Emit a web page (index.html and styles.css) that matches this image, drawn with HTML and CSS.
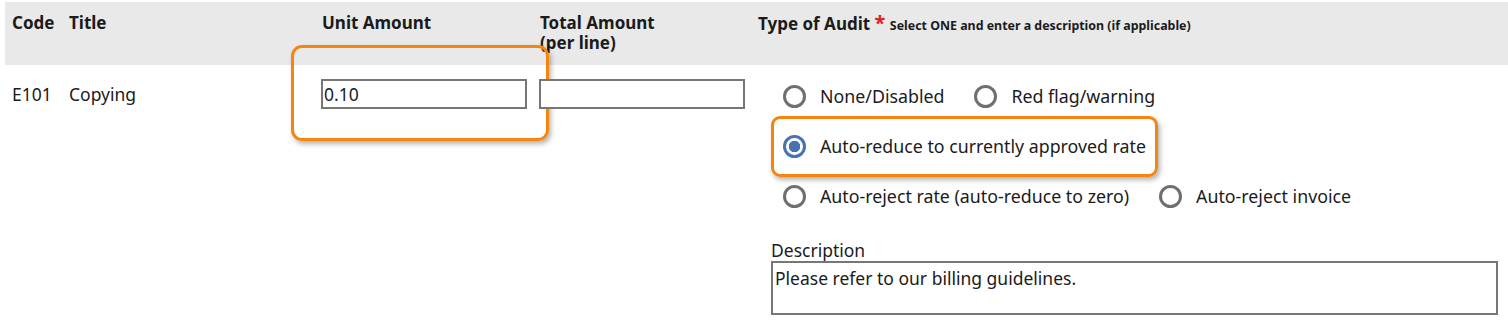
FILE: index.html
```html
<!DOCTYPE html>
<html lang="en">
<head>
  <meta charset="UTF-8">
  <title>Audit rules</title>
  <link rel="stylesheet" href="styles.css">
</head>
<body>

  <div class="rule-head">
    <div class="col-code">Code</div>
    <div class="col-title">Title</div>
    <div class="col-unit">Unit Amount</div>
    <div class="col-total">Total Amount<br>(per line)</div>
    <div class="col-audit">Type of Audit <span class="star">*</span> <span class="hint">Select ONE and enter a description (if applicable)</span></div>
  </div>

  <div class="rule-row">
    <div class="col-code cell-text">E101</div>
    <div class="col-title cell-text">Copying</div>
    <div class="col-unit">
      <div class="field highlight-field">
        <input type="text" value="0.10">
      </div>
    </div>
    <div class="col-total">
      <div class="field">
        <input type="text" value="">
      </div>
    </div>
    <div class="col-audit audit-cell">
      <div class="audit-options">
        <div class="option-line">
          <label class="option"><input type="radio" name="audit"><span>None/Disabled</span></label>
          <label class="option"><input type="radio" name="audit"><span>Red flag/warning</span></label>
        </div>
        <div class="option-line">
          <label class="option highlight-option"><input type="radio" name="audit" checked><span>Auto-reduce to currently approved rate</span></label>
        </div>
        <div class="option-line">
          <label class="option"><input type="radio" name="audit"><span>Auto-reject rate (auto-reduce to zero)</span></label>
          <label class="option"><input type="radio" name="audit"><span>Auto-reject invoice</span></label>
        </div>
      </div>
      <div class="description">
        <label for="desc">Description</label>
        <textarea id="desc">Please refer to our billing guidelines.</textarea>
      </div>
    </div>
  </div>

</body>
</html>
```

FILE: styles.css
```css
body {
  margin: 0;
  font-family: "Noto Sans", "Open Sans", sans-serif;
  color: #1b1b1b;
  background: #fff;
}
.rule-head,
.rule-row {
  display: flex;
  margin-left: 5px;
  padding-left: 7px;
}
.rule-head {
  margin-top: 2px;
  height: 63px;
  box-sizing: border-box;
  padding-top: 11px;
  background-color: #e9e9e9;
  font-weight: 700;
  font-size: 17px;
  line-height: 20px;
}
.col-code {
  width: 57px;
  flex-shrink: 0;
}
.col-title {
  width: 253px;
  flex-shrink: 0;
}
.col-unit,
.col-total {
  width: 218px;
  flex-shrink: 0;
}
.col-audit {
  flex: 1;
}
.star {
  color: #e21b1b;
  font-size: 20px;
}
.hint {
  font-size: 12.4px;
}
.rule-row {
  padding-top: 14px;
}
.cell-text {
  font-size: 17.5px;
  line-height: 30px;
}
.field {
  position: relative;
  margin-left: -1px;
  width: 206px;
}
.field input {
  display: block;
  width: 100%;
  height: 30px;
  box-sizing: border-box;
  border: 2px solid #777;
  padding: 0 1px;
  font-family: "Noto Sans", sans-serif;
  font-size: 17.5px;
  color: #1b1b1b;
  outline: none;
}
.highlight-field::after {
  content: "";
  position: absolute;
  top: -34px;
  bottom: -32px;
  left: -30px;
  right: -22px;
  border: 3px solid #f58410;
  border-radius: 11px;
  box-shadow: 2px 3px 5px rgba(0, 0, 0, 0.3);
  pointer-events: none;
}
.audit-cell {
  padding-left: 13px;
}
.audit-options {
  margin-top: -8px;
}
.option-line {
  display: flex;
  gap: 6px;
  height: 50px;
  align-items: center;
}
.option {
  position: relative;
  display: flex;
  align-items: center;
  gap: 14px;
  padding: 0 12px;
  height: 50px;
  font-size: 17.8px;
  color: #1b1b1b;
}
.option input {
  appearance: none;
  margin: 0;
  width: 23px;
  height: 23px;
  border: 3px solid #6f6f6f;
  border-radius: 50%;
  box-sizing: border-box;
  background: #fff;
}
.option input:checked {
  border-color: #4a72b2;
  background: radial-gradient(circle, #4a72b2 0 5.5px, #fff 6px);
}
.highlight-option::after {
  content: "";
  position: absolute;
  top: -5px;
  bottom: -6px;
  left: 0;
  right: 0;
  border: 3px solid #f58410;
  border-radius: 9px;
  box-shadow: 2px 3px 5px rgba(0, 0, 0, 0.3);
  pointer-events: none;
}
.description {
  margin-top: 19px;
}
.description label {
  display: block;
  font-size: 17.5px;
  line-height: 21px;
}
.description textarea {
  display: block;
  width: 727px;
  height: 54px;
  box-sizing: border-box;
  border: 2px solid #777;
  padding: 3px 2px;
  font-family: "Noto Sans", sans-serif;
  font-size: 17.5px;
  color: #1b1b1b;
  resize: none;
}
```
